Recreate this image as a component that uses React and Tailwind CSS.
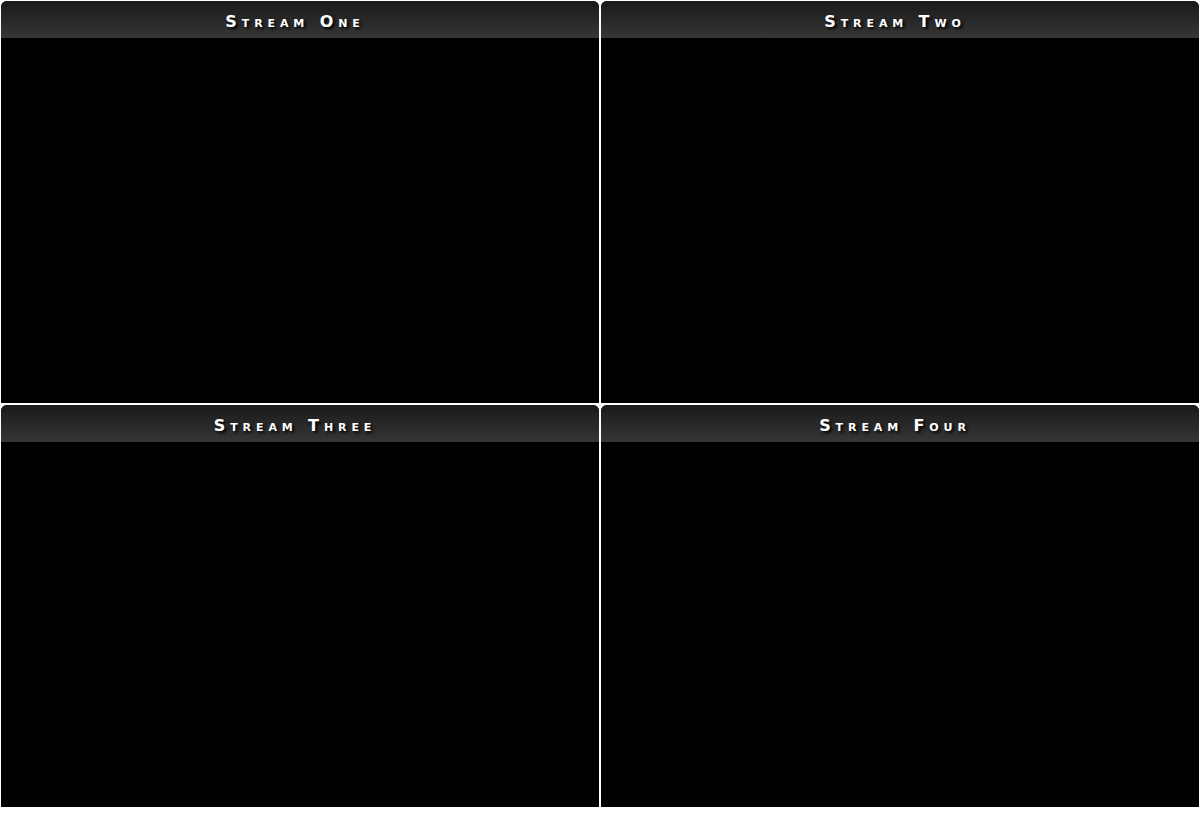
import React from 'react';

const streams = ['Stream One', 'Stream Two', 'Stream Three', 'Stream Four'];

const StreamPanel = ({ title }) => (
  <div className="m-[1px] flex h-[402px] flex-col overflow-hidden rounded-t-[6px] bg-black">
    <div className="flex h-[37px] items-center justify-center bg-gradient-to-b from-[#1a1a1a] to-[#363636] pt-[5px] pr-[10px]">
      <span
        className="text-[16px] font-bold tracking-[4.9px] text-white [font-family:'DejaVu_Sans',sans-serif] [font-variant:small-caps] [text-shadow:2px_2px_3px_#000]"
      >
        {title}
      </span>
    </div>
    <div className="flex-1 bg-black" />
  </div>
);

const App = () => {
  return (
    <div className="h-[820px] w-[1200px] bg-white">
      <div className="grid grid-cols-2">
        {streams.map((s) => (
          <StreamPanel key={s} title={s} />
        ))}
      </div>
    </div>
  );
};

export default App;
